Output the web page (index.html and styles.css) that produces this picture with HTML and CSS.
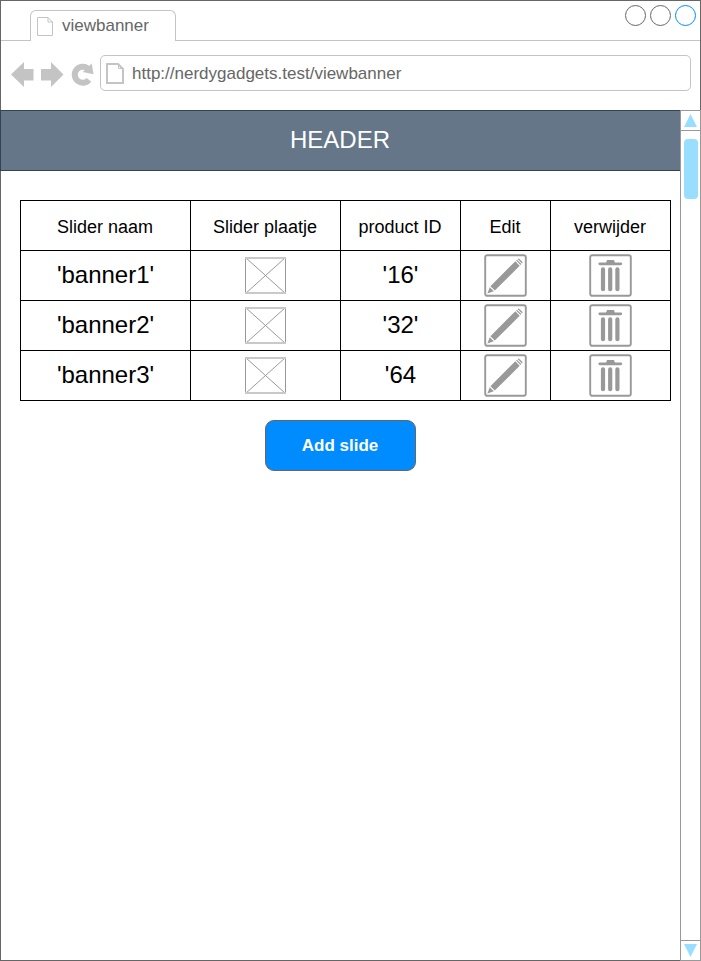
FILE: index.html
```
<!DOCTYPE html>
<html lang="nl">
<head>
<meta charset="utf-8">
<title>viewbanner</title>
<link rel="stylesheet" href="styles.css">
</head>
<body>
<svg class="defs" width="0" height="0">
  <symbol id="image" viewBox="0 0 41 37">
    <path d="M.5 .5L40.5 36.5M40.5 .5L.5 36.5M.5 0V37M40.5 0V37" fill="none" stroke="#999"/>
    <path d="M0 1H41M0 36H41" stroke="#c9c9c9" stroke-width="2"/>
  </symbol>
  <symbol id="edit" viewBox="0 0 43 43">
    <rect x="1.2" y="1.2" width="40.6" height="40.6" rx="2" fill="#fff" stroke="#999" stroke-width="1.9"/>
    <path d="M3.4 39.6L5.7 33.2L9.8 37.3ZM6.4 32.2L31.3 7.3L35.7 11.7L10.8 36.6ZM32.1 6.5L32.9 5.7L37.3 10.1L36.5 10.9ZM33.6 5Q34.5 4.1 35.4 4.9L38.1 7.6Q38.9 8.5 38 9.4Z" fill="#999"/>
  </symbol>
  <symbol id="trash" viewBox="0 0 43 43">
    <rect x="1.2" y="1.2" width="40.6" height="40.6" rx="2" fill="#fff" stroke="#999" stroke-width="1.9"/>
    <path d="M10.8 9.8H31.8" stroke="#999" stroke-width="2.8" stroke-linecap="round"/>
    <path d="M17 9L18 6H25L26 9Z" fill="#999"/>
    <path d="M14 15.4V35.2M21.2 15.4V35.2M28.4 15.4V35.2" stroke="#999" stroke-width="4.2" stroke-linecap="round"/>
  </symbol>
</svg>
<div class="window">
  <div class="tabbar">
    <div class="tab">
      <svg width="16" height="19" viewBox="0 0 16 19" fill="none" stroke="#c4c4c4"><path d="M.5 .5H11L15.5 5V18.5H.5ZM11 .5V5H15.5"/></svg>
      <span>viewbanner</span>
    </div>
    <div class="controls"><i></i><i></i><i class="active"></i></div>
  </div>
  <div class="toolbar">
    <svg class="nav" width="83" height="26" viewBox="0 0 83 26" fill="#c4c4c4">
      <path d="M0 12.5L13 0V7H22.5V18.5H13V25ZM52.5 12.5L40 0V7H30V18.5H40V25Z"/>
      <path d="M78 17.8A8 8 0 1 1 76.8 6.5" fill="none" stroke="#c4c4c4" stroke-width="6"/>
      <path d="M71.7 10L80.7 1.5L82.5 12.3Z"/>
    </svg>
    <div class="address">
      <svg width="18" height="21" viewBox="0 0 18 21" fill="none" stroke="#c4c4c4"><path d="M1 1H12L17 6V20H1Z" stroke-width="2"/><path d="M12.5 1V5.5H17"/></svg>
      <span>http://nerdygadgets.test/viewbanner</span>
    </div>
  </div>
  <div class="page">
    <main>
      <header>HEADER</header>
      <div class="table">
        <div class="cell head">Slider naam</div><div class="cell head">Slider plaatje</div><div class="cell head">product ID</div><div class="cell head">Edit</div><div class="cell head">verwijder</div>
        <div class="cell value">'banner1'</div><div class="cell"><svg class="image"><use href="#image"/></svg></div><div class="cell value">'16'</div><div class="cell"><svg class="icon"><use href="#edit"/></svg></div><div class="cell"><svg class="icon"><use href="#trash"/></svg></div>
        <div class="cell value">'banner2'</div><div class="cell"><svg class="image"><use href="#image"/></svg></div><div class="cell value">'32'</div><div class="cell"><svg class="icon"><use href="#edit"/></svg></div><div class="cell"><svg class="icon"><use href="#trash"/></svg></div>
        <div class="cell value">'banner3'</div><div class="cell"><svg class="image"><use href="#image"/></svg></div><div class="cell value">'64</div><div class="cell"><svg class="icon"><use href="#edit"/></svg></div><div class="cell"><svg class="icon"><use href="#trash"/></svg></div>
      </div>
      <button class="add">Add slide</button>
    </main>
    <div class="scrollbar">
      <div class="arrow"><svg width="13" height="13" viewBox="0 0 13 13"><path d="M6.5 0L13 13H0Z" fill="#9df"/></svg></div>
      <div class="track"><div class="thumb"></div></div>
      <div class="arrow down"><svg width="13" height="13" viewBox="0 0 13 13"><path d="M0 0H13L6.5 13Z" fill="#9df"/></svg></div>
    </div>
  </div>
</div>
</body>
</html>
```
FILE: styles.css
```
* { box-sizing: border-box; }
body { margin: 0; background: #fff; font-family: "Liberation Sans", Arial, sans-serif; }
svg { display: block; flex: none; }
.defs { position: absolute; }
.window { width: 701px; height: 961px; border: 1px solid #666; display: flex; flex-direction: column; }
.tabbar { height: 40px; border-bottom: 1px solid #c4c4c4; display: flex; justify-content: space-between; padding: 9px 4px 0 29px; }
.tab { width: 146px; height: 31px; border: 1px solid #c4c4c4; border-bottom: 0; border-radius: 6px 6px 0 0; background: #fff; display: flex; align-items: flex-start; padding: 6px 0 0 6px; gap: 9px; color: #666; font-size: 17px; line-height: 20px; }
.tab span { margin-top: -1px; }
.controls { display: flex; gap: 4px; margin-top: -5px; }
.controls i { width: 21px; height: 21px; border: 1px solid #666; border-radius: 50%; }
.controls .active { border-color: #008cff; }
.toolbar { height: 69px; display: flex; padding: 14px 9px 0 10px; }
.nav { margin: 7px 6px 0 0; }
.address { flex: 1; height: 36px; border: 1px solid #c4c4c4; border-radius: 5px; display: flex; align-items: center; padding-left: 5px; gap: 8px; color: #666; font-size: 17px; line-height: 20px; }
.address span { padding-top: 2px; }
.page { flex: 1; display: flex; margin: 0 -1px -1px; }
main { flex: 1; border: solid #666; border-width: 0 0 1px; }
header { height: 61px; padding-right: 1px; background: #647687; border: 1px solid #314354; border-right: 0; color: #fff; font-size: 24px; line-height: 58px; text-align: center; }
.table { margin: 29px 0 0 20px; width: 651px; display: grid; grid-template-columns: 170px 150px 120px 90px 120px; grid-auto-rows: 50px; border: solid #000; border-width: 1px 0 0 1px; }
.cell { border: solid #000; border-width: 0 1px 1px 0; display: flex; align-items: center; justify-content: center; }
.head { padding: 2px 1px 0 0; font-size: 18px; line-height: 20px; }
.value { font-size: 24px; line-height: 28px; padding-bottom: 2px; }
.icon { width: 43px; height: 43px; }
.image { width: 41px; height: 37px; margin-right: 1px; }
.add { display: block; width: 151px; height: 51px; margin: 19px 0 0 265px; padding: 1px 1px 0 0; border: 1px solid #666; border-radius: 9px; background: #008cff; color: #fff; font: bold 17px/20px "Liberation Sans", Arial, sans-serif; }
.scrollbar { width: 21px; border: 1px solid #999; background: #fff; display: flex; flex-direction: column; }
.arrow { height: 20px; border-bottom: 1px solid #999; display: flex; align-items: center; justify-content: center; }
.arrow.down { border-bottom: 0; border-top: 1px solid #999; }
.track { flex: 1; padding: 8px 2px; }
.thumb { width: 14.5px; height: 60px; margin-left: .5px; background: #9df; border-radius: 4px; }
```
